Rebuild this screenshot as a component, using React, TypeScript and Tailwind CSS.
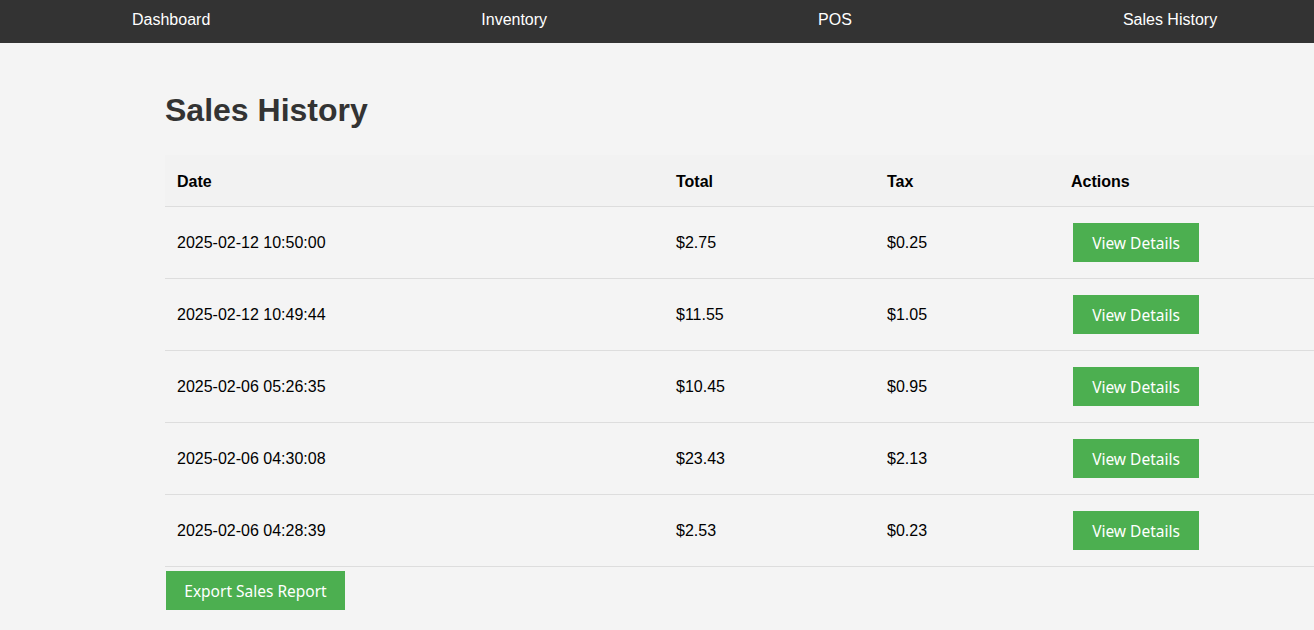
const sales = [
  { date: "2025-02-12 10:50:00", total: "$2.75", tax: "$0.25" },
  { date: "2025-02-12 10:49:44", total: "$11.55", tax: "$1.05" },
  { date: "2025-02-06 05:26:35", total: "$10.45", tax: "$0.95" },
  { date: "2025-02-06 04:30:08", total: "$23.43", tax: "$2.13" },
  { date: "2025-02-06 04:28:39", total: "$2.53", tax: "$0.23" },
];

const navItems = ["Dashboard", "Inventory", "POS", "Sales History"];

function GreenButton({ label, className = "" }: { label: string; className?: string }) {
  return (
    <button
      className={`h-[39px] pt-[3px] bg-[#4CAF50] text-white text-[15.5px] font-['Noto_Sans',sans-serif] flex items-center justify-center ${className}`}
    >
      {label}
    </button>
  );
}

export default function App() {
  return (
    <div className="min-h-[630px] bg-[#f4f4f4] font-['Liberation_Sans',Arial,sans-serif] overflow-hidden">
      <nav className="h-[43px] bg-[#333] flex items-center pl-[132px] gap-[271px] pb-[4px]">
        {navItems.map((n) => (
          <a key={n} className="text-white text-base whitespace-nowrap">
            {n}
          </a>
        ))}
      </nav>

      <main className="pl-[165px] pt-[49px]">
        <h1 className="text-[32px] font-bold text-[#333] leading-[37px] mb-[26px]">Sales History</h1>

        <table className="table-fixed border-collapse w-[calc(100vw-165px)] text-base text-black">
          <thead>
            <tr className="bg-[#f2f2f2] border-b border-[#ddd]">
              <th className="w-[499px] text-left font-bold px-3 h-[51px] pt-[3px]">Date</th>
              <th className="w-[211px] text-left font-bold px-3 pt-[3px]">Total</th>
              <th className="w-[184px] text-left font-bold px-3 pt-[3px]">Tax</th>
              <th className="text-left font-bold px-3 pt-[3px]">Actions</th>
            </tr>
          </thead>
          <tbody>
            {sales.map((s) => (
              <tr key={s.date} className="border-b border-[#ddd] h-[72px]">
                <td className="px-3 pt-[2px]">{s.date}</td>
                <td className="px-3 pt-[2px]">{s.total}</td>
                <td className="px-3 pt-[2px]">{s.tax}</td>
                <td className="px-3">
                  <GreenButton label="View Details" className="w-[126px] ml-[2px]" />
                </td>
              </tr>
            ))}
          </tbody>
        </table>

        <GreenButton label="Export Sales Report" className="w-[179px] ml-px mt-[4px]" />
      </main>
    </div>
  );
}
